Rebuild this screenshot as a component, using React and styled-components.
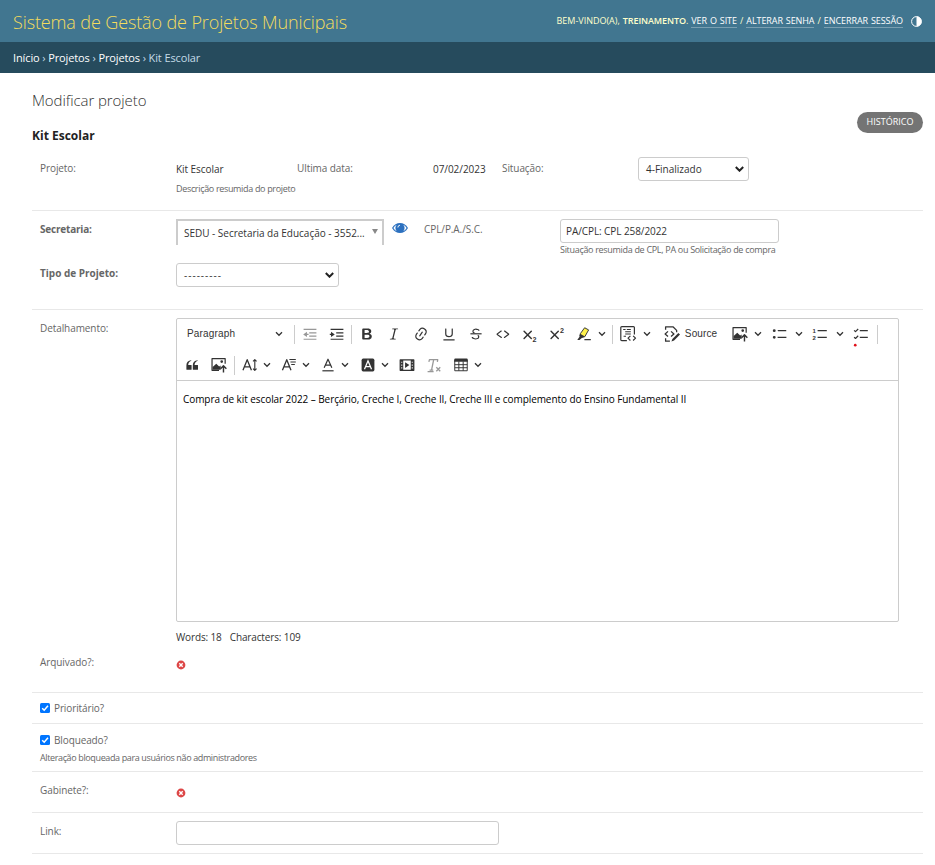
import React from "react";
import styled, { createGlobalStyle } from "styled-components";

const GlobalStyle = createGlobalStyle`
  * {
    box-sizing: border-box;
  }

  body {
    margin: 0;
    background-color: white;
    color: #333;
    font-family: "Open Sans", "Noto Sans", sans-serif;
    font-size: 10px;
    line-height: 14px;
  }
`;

const Container = styled.div`
  width: 935px;
  height: 865px;
  overflow: hidden;
`;

const Header = styled.header`
  height: 42px;
  padding: 0px 13px;
  display: flex;
  align-items: center;
  justify-content: space-between;
  background-color: #417690;
`;

const SiteName = styled.h1`
  margin: 2px 0px 0px;
  color: #f5dd5d;
  font-size: 18px;
  font-weight: 300;
  line-height: 24px;
  letter-spacing: -0.12px;
`;

const UserTools = styled.div`
  display: flex;
  align-items: center;
  color: #ffc;
  font-size: 9px;
  line-height: 12px;
  word-spacing: 0.7px;
  white-space: pre;
`;

const UserName = styled.strong`
  font-weight: 600;
  letter-spacing: -0.1px;
`;

const UserLink = styled.a`
  color: white;
  border-bottom: 1px solid rgba(255, 255, 255, 0.3);
  letter-spacing: -0.08px;
`;

const ThemeIcon = styled.svg`
  width: 11px;
  height: 11px;
  margin-left: 8px;
`;

const Breadcrumbs = styled.nav`
  height: 31px;
  padding-left: 13px;
  color: #c4dce8;
  background-color: #264b5d;
  font-size: 11px;
  line-height: 31px;
  letter-spacing: -0.12px;
`;

const Crumb = styled.a`
  color: white;
`;

const Content = styled.main`
  padding: 0px 12px 0px 32px;
`;

const Heading = styled.div`
  height: 74px;
  display: flex;
  justify-content: space-between;
`;

const PageTitle = styled.h2`
  margin: 16px 0px 0px;
  font-size: 15px;
  font-weight: 300;
  line-height: 22px;
  letter-spacing: -0.08px;
`;

const ObjectTitle = styled.h3`
  margin: 17px 0px 0px;
  color: #222;
  font-size: 12px;
  font-weight: 700;
  line-height: 16px;
`;

const HistoryButton = styled.a`
  width: 66px;
  height: 21px;
  margin-top: 39px;
  border-radius: 11px;
  background-color: #747474;
  color: white;
  font-size: 9px;
  line-height: 20px;
  text-align: center;
`;

const Row = styled.div`
  height: ${(props) => props.$height}px;
  padding-left: 8px;
  border-bottom: 1px solid #e8e8e8;
`;

const Fields = styled.div`
  height: ${(props) => props.$height || "auto"};
  padding-top: ${(props) => props.$top}px;
  display: flex;
  align-items: flex-start;
`;

const Label = styled.label`
  width: 136px;
  flex-shrink: 0;
  margin-top: ${(props) => props.$top || 0}px;
  color: #666;
  font-weight: ${(props) => (props.$required ? 700 : 400)};
  letter-spacing: ${(props) => props.$spacing || "-0.08px"};
`;

const Value = styled.div`
  width: ${(props) => props.$width}px;
  padding-top: 1px;
  letter-spacing: -0.05px;
  white-space: nowrap;
`;

const Help = styled.div`
  margin-top: ${(props) => props.$top || 0}px;
  color: #666;
  font-size: 9px;
  letter-spacing: ${(props) => props.$spacing || "-0.33px"};
  white-space: nowrap;
`;

const InputBox = styled.div`
  width: ${(props) => props.$width}px;
  height: 24px;
  padding: 4px 5px;
  border: 1px solid #ccc;
  border-radius: 3px;
  letter-spacing: -0.08px;
`;

const SelectBox = styled.div`
  width: ${(props) => props.$width}px;
  height: 24px;
  padding: 0px 4px 0px 7px;
  display: flex;
  align-items: center;
  justify-content: space-between;
  border: 1px solid #ccc;
  border-radius: 3px;
  letter-spacing: ${(props) => props.$spacing || 0};
`;

const SelectArrow = styled.svg`
  width: 9px;
  height: 6px;
`;

const SearchSelect = styled.div`
  width: 208px;
  height: 26px;
  padding: 5px 4px 0px 6px;
  display: flex;
  justify-content: space-between;
  border: 2px solid #ccc;
  border-bottom: none;
  letter-spacing: -0.02px;
  white-space: nowrap;
`;

const Triangle = styled.span`
  height: 0;
  margin-top: 3px;
  border: 3px solid transparent;
  border-top: 5px solid #888;
  border-bottom: none;
`;

const EyeIcon = styled.svg`
  width: 16px;
  height: 12px;
  margin: 3px 16px 0px 8px;
`;

const Editor = styled.div`
  width: 723px;
  height: 304px;
  border: 1px solid #ccc;
  border-radius: 2px;
`;

const Toolbar = styled.div`
  height: 62px;
  border-bottom: 1px solid #ccc;
`;

const ToolbarLine = styled.div`
  height: ${(props) => props.$height}px;
  padding-left: ${(props) => props.$start || 0}px;
  display: flex;
  align-items: center;
`;

const HeadingMenu = styled.div`
  width: 116px;
  padding: 0px 10px;
  display: flex;
  align-items: center;
  justify-content: space-between;
  letter-spacing: 0.18px;
  font-family: "Liberation Sans", Arial, sans-serif;
`;

const Tool = styled.div`
  width: ${(props) => props.$width || 27.2}px;
  flex-shrink: 0;
  display: flex;
  justify-content: center;
  opacity: ${(props) => (props.$disabled ? 0.5 : 1)};
`;

const ToolArrow = styled.div`
  width: ${(props) => props.$width}px;
  margin-right: ${(props) => props.$gap || 0}px;
  flex-shrink: 0;
  display: flex;
  justify-content: center;
`;

const SourceText = styled.span`
  width: 41px;
  margin-left: -1px;
  font-family: "Liberation Sans", Arial, sans-serif;
  letter-spacing: 0.1px;
`;

const Separator = styled.span`
  width: 1px;
  height: 19px;
  margin: 0px 1px 0px ${(props) => props.$before || 1}px;
  background-color: #ccc;
`;

const ToolSvg = styled.svg`
  width: 16px;
  height: 16px;
  flex-shrink: 0;
  overflow: visible;
  fill: #333;
`;

const Strokes = styled.g`
  fill: none;
  stroke: #333;
  stroke-width: ${(props) => props.$weight || 1.5};
  stroke-linecap: ${(props) => props.$cap || "butt"};
  stroke-linejoin: round;
`;

const IconText = styled.text`
  font-family: "Liberation Sans", Arial, sans-serif;
  font-size: ${(props) => props.$size}px;
  font-weight: 700;
`;

const ChevronSvg = styled.svg`
  width: 8px;
  height: 6px;
  flex-shrink: 0;
`;

const EditorText = styled.p`
  margin: 11px 0px 0px 6px;
  color: black;
  letter-spacing: -0.07px;
  white-space: nowrap;
`;

const WordCount = styled.div`
  margin: 8px 0px 0px 136px;
  display: flex;
  gap: 8px;
  letter-spacing: -0.13px;
`;

const NoIcon = styled.svg`
  width: 10px;
  height: 10px;
  margin-top: ${(props) => props.$top}px;
`;

const CheckLabel = styled.label`
  display: flex;
  align-items: flex-start;
  gap: 4px;
  color: #666;
  letter-spacing: -0.12px;
`;

const CheckBox = styled.svg`
  width: 10px;
  height: 10px;
  margin-top: 2px;
`;

const icons = {
  outdent: (
    <>
      <path d="M2 3.5h16V5H2zM9 7.8h9v1.5H9zM9 11.8h9v1.5H9zM2 15.8h16v1.5H2z" />
      <path d="M6.2 7.2 1.5 10.5l4.7 3.2v-2.4h2V9.8h-2z" />
    </>
  ),
  indent: (
    <>
      <path d="M2 3.5h16V5H2zM9 7.8h9v1.5H9zM9 11.8h9v1.5H9zM2 15.8h16v1.5H2z" />
      <path d="M2.5 7.2 7.2 10.5l-4.7 3.2v-2.4H1V9.8h1.5z" />
    </>
  ),
  bold: (
    <path d="M10.187 17H5.773c-.637 0-1.092-.138-1.364-.415-.273-.277-.409-.718-.409-1.323V4.738c0-.617.14-1.062.419-1.332.279-.27.73-.406 1.354-.406h4.68c.69 0 1.288.041 1.793.124.506.083.96.242 1.36.477.341.197.644.447.906.75a3.262 3.262 0 0 1 .808 2.162c0 1.401-.722 2.426-2.167 3.075C15.05 10.175 16 11.315 16 13.01a3.756 3.756 0 0 1-2.296 3.504 6.1 6.1 0 0 1-1.517.377c-.571.073-1.238.11-2 .11zm-.217-6.217H7v4.087h3.069c1.977 0 2.965-.69 2.965-2.072 0-.707-.256-1.22-.768-1.537-.512-.319-1.277-.478-2.296-.478zM7 5.13v3.619h2.606c.729 0 1.292-.067 1.69-.2a1.6 1.6 0 0 0 .91-.765c.165-.267.247-.566.247-.897 0-.707-.26-1.176-.778-1.409-.519-.232-1.31-.348-2.375-.348H7z" />
  ),
  italic: (
    <path d="m9.586 14.633.021.004c-.036.335.095.655.393.962.082.083.173.15.274.201h1.474a.6.6 0 1 1 0 1.2H5.304a.6.6 0 0 1 0-1.2h1.15c.474-.07.809-.182 1.005-.334.157-.122.291-.32.404-.597l2.416-9.55a1.053 1.053 0 0 0-.281-.823 1.12 1.12 0 0 0-.442-.296H8.15a.6.6 0 0 1 0-1.2h6.443a.6.6 0 1 1 0 1.2h-1.195c-.376.056-.65.155-.823.296-.215.175-.423.439-.623.79l-2.366 9.347z" />
  ),
  link: (
    <path d="m11.077 15 .991-1.416a.75.75 0 1 1 1.229.86l-1.148 1.64a.748.748 0 0 1-.217.206 5.251 5.251 0 0 1-8.503-5.955.741.741 0 0 1 .12-.274l1.147-1.639a.75.75 0 1 1 1.228.86L4.933 10.7l.006.003a3.75 3.75 0 0 0 6.132 4.294l.006.004zm5.494-5.335a.748.748 0 0 1-.12.274l-1.147 1.639a.75.75 0 1 1-1.228-.86l.86-1.23a3.75 3.75 0 0 0-6.144-4.301l-.86 1.229a.75.75 0 0 1-1.229-.86l1.148-1.64a.748.748 0 0 1 .217-.206 5.251 5.251 0 0 1 8.503 5.955zm-4.563-2.532a.75.75 0 0 1 .184 1.045l-3.155 4.505a.75.75 0 1 1-1.229-.86l3.155-4.506a.75.75 0 0 1 1.045-.184z" />
  ),
  underline: (
    <path d="M3 18v-1.5h14V18zm2.2-8V3.6c0-.4.4-.6.8-.6.3 0 .7.2.7.6v6.2c0 2 1.3 2.8 3.2 2.8 1.9 0 3.4-.9 3.4-2.9V3.6c0-.3.4-.5.8-.5.3 0 .7.2.7.5V10c0 2.7-2.2 4-4.9 4-2.6 0-4.7-1.2-4.7-4z" />
  ),
  strike: (
    <>
      <path d="M7 16.4c-.8-.4-1.5-.9-2.2-1.5a.6.6 0 0 1-.2-.5l.3-.6h1c1 1.2 2.1 1.7 3.7 1.7 1 0 1.8-.3 2.3-.6.6-.4.6-1.2.6-1.3.2-1.2-.9-2.1-.9-2.1h2.1c.3.7.4 1.2.4 1.7v.8l-.6 1.2c-.6.8-1.1 1-1.6 1.2a6 6 0 0 1-2.4.6c-1 0-1.8-.3-2.5-.6zM6.8 9 6 8.3c-.4-.5-.5-.8-.5-1.6 0-.7.1-1.3.5-1.8.4-.6 1-1 1.6-1.3a6.3 6.3 0 0 1 4.7 0 4 4 0 0 1 1.7 1l.3.7c0 .1.2.4-.2.7-.4.2-.9.1-1 0a3 3 0 0 0-1.2-1c-.4-.2-1-.3-2-.4-.7 0-1.4.2-2 .6-.8.6-1 .8-1 1.5 0 .8.5 1 1.2 1.5.6.4 1.1.7 1.9 1H6.8z" />
      <path d="M3 10.5V9h14v1.5z" />
    </>
  ),
  code: (
    <path d="m12.5 5.7 5.2 3.9v1.3l-5.6 4c-.1.2-.3.2-.5.2-.3-.1-.6-.7-.6-1l.3-.4 4.7-3.5L11.5 7l-.2-.2c-.1-.3-.1-.6 0-.8.2-.2.5-.4.8-.4a.8.8 0 0 1 .4.1zm-5.2 0L2 9.6v1.3l5.6 4c.1.2.3.2.5.2.3-.1.7-.7.6-1 0-.1 0-.3-.2-.4l-5-3.5L8.2 7l.2-.2c.1-.3.1-.6 0-.8-.2-.2-.5-.4-.8-.4a.8.8 0 0 0-.3.1z" />
  ),
  subscript: (
    <>
      <Strokes $weight={1.8} $cap="round">
        <path d="M2.6 6.5l9 9M11.6 6.5l-9 9" />
      </Strokes>
      <IconText x="13.2" y="19.4" $size={9}>
        2
      </IconText>
    </>
  ),
  superscript: (
    <>
      <Strokes $weight={1.8} $cap="round">
        <path d="M2.6 6.5l9 9M11.6 6.5l-9 9" />
      </Strokes>
      <IconText x="13.8" y="9" $size={9}>
        2
      </IconText>
    </>
  ),
  highlight: (
    <>
      <path d="M10.8 2.2 15.5 5l-4.3 8.5-6-3.3z" fill="#fdf04a" />
      <Strokes $weight={1.2}>
        <path d="M10.8 2.2 15.8 4.9 11 13.4 7 14.2 4.8 12.8 5.4 9.6z" />
      </Strokes>
      <path d="M5.200 9.600 11.200 13 7.600 14.800 4.400 17.600H1.600l3-4.400zM10.500 16.200h8v1.500h-8z" />
    </>
  ),
  template: (
    <Strokes $weight={1.5}>
      <path d="M8.6 18.4H2.2A1.2 1.2 0 0 1 1 17.200V1.900A1.200 1.200 0 0 1 2.200.7h14.600A1.200 1.200 0 0 1 18 1.900V10.600" />
      <path d="M4 4.400h3M8.500 4.400h5M6.500 7.200h7M6.500 10h7M4.500 12.800h3" />
      <path d="M13 12.300l-3 2.900 3 2.900M16.400 12.300l3 2.900-3 2.900" />
    </Strokes>
  ),
  source: (
    <>
      <Strokes $weight={1.6}>
        <path d="M2 4.800V1h9.200l4.600 4.500v2.300M2 15.200V19h5.400" />
        <path d="M5 6.700 1.400 10l3.600 3.200M8.800 6.700l3.600 3.300-3.600 3.200" />
      </Strokes>
      <path d="M18 8.800 20 10.600l-7.400 7.600-3.300 1.200 1.200-3.300z" />
    </>
  ),
  image: (
    <>
      <Strokes $weight={1.5}>
        <path d="M10 16.6H1.3V2h16.4v6.5" />
      </Strokes>
      <path d="M2 16V12.5l4.600-4.200 3.600 3.600 1.800-1.400.2 5.500zM13.400 4a1.700 1.700 0 1 1 0 3.400 1.700 1.700 0 0 1 0-3.400z" />
      <Strokes $weight={1.8}>
        <path d="M15.6 19.4v-8M12 14.6l3.6-3.6 3.6 3.6" />
      </Strokes>
    </>
  ),
  bulleted: (
    <path d="M7 5.700c0 .4.4.8.8.8h10V5H7.800c-.4 0-.8.3-.8.7zM7 15h11v-1.500H7zM2.800 4a1.800 1.800 0 1 1 0 3.600 1.800 1.800 0 0 1 0-3.600zm0 8.400a1.800 1.800 0 1 1 0 3.600 1.800 1.800 0 0 1 0-3.600z" />
  ),
  numbered: (
    <>
      <path d="M7 5h11.500v1.500H7zM7 13.500h11.500V15H7z" />
      <IconText x="0.6" y="8.2" $size={7.5}>
        1
      </IconText>
      <IconText x="0.6" y="17.2" $size={7.5}>
        2
      </IconText>
    </>
  ),
  todo: (
    <>
      <path d="M8.500 5h10v1.500h-10zM8.500 13.500h10V15h-10z" />
      <Strokes $weight={1.5}>
        <path d="M1.400 5.400l1.700 1.700 3.400-3.400M1.400 13.900l1.700 1.700 3.400-3.400" />
      </Strokes>
      <circle cx="2.8" cy="24" r="1.7" fill="#e0101a" />
    </>
  ),
  quote: (
    <path d="M3 10.423a6.5 6.5 0 0 1 6.056-6.408l.038.67C6.448 5.423 5.354 7.663 5.22 10H9c.552 0 .5.432.5.986v4.511c0 .554-.448.503-1 .503h-5c-.552 0-.5-.449-.5-1.003v-4.574zm8 0a6.5 6.5 0 0 1 6.056-6.408l.038.67c-2.646.739-3.74 2.979-3.873 5.315H17c.552 0 .5.432.5.986v4.511c0 .554-.448.503-1 .503h-5c-.552 0-.5-.449-.5-1.003v-4.574z" />
  ),
  fontSize: (
    <>
      <Strokes $weight={1.6}>
        <path d="M1.2 16.5 6.5 3.3l5.3 13.2M3 12.3h7" />
      </Strokes>
      <Strokes $weight={1.4}>
        <path d="M16 4.5v11M13.8 5.6 16 3.2l2.2 2.4M13.8 14.4l2.2 2.4 2.2-2.4" />
      </Strokes>
    </>
  ),
  fontFamily: (
    <>
      <Strokes $weight={1.6}>
        <path d="M1.8 16.5 7.2 3.3l5.3 13.2M3.6 12.3h7" />
      </Strokes>
      <path d="M10.5 2.6h8v1.3h-8zM11.8 5.6h6.7v1.3h-6.7zM12.8 8.6h4.5v1.3h-4.5z" />
    </>
  ),
  fontColor: (
    <>
      <Strokes $weight={1.5}>
        <path d="M5.2 13.5 10 2.8l4.8 10.7M6.8 10.2h6.4" />
      </Strokes>
      <path d="M3 16.5h14V18H3z" />
    </>
  ),
  fontBackground: (
    <>
      <rect x="2" y="2" width="16" height="16" rx="2" />
      <path d="M5.6 15.2 10 4.8l4.4 10.4M7.2 12h5.6" fill="none" stroke="white" strokeWidth="1.6" />
    </>
  ),
  media: (
    <>
      <Strokes $weight={1.5}>
        <path d="M1.500 3.600h17v13h-17z" />
      </Strokes>
      <path d="M1.500 3.600h3.800v13H1.500zM14.700 3.600h3.800v13h-3.800zM7.600 6.600 13 10.100l-5.400 3.500z" />
      <path d="M2.800 5.800h1.300v1.500H2.800zM2.800 9.300h1.300v1.500H2.800zM2.800 12.800h1.300v1.500H2.800zM15.900 5.800h1.300v1.500h-1.300zM15.900 9.300h1.300v1.500h-1.300zM15.900 12.800h1.300v1.500h-1.300z" fill="white" />
    </>
  ),
  removeFormat: (
    <Strokes $weight={1.6}>
      <path d="M3.6 6 4.3 3.3h10.4L14.2 6M9.6 3.3 7 16.2M4.5 16.4H9M2 18.4h7.5" />
      <path d="M12.9 12.9l4.900 4.900M17.800 12.900l-4.900 4.900" />
    </Strokes>
  ),
  table: (
    <>
      <path d="M1.5 3.5A1.5 1.5 0 0 1 3 2h14a1.5 1.5 0 0 1 1.5 1.5V6h-17z" />
      <Strokes $weight={1.2}>
        <path d="M2.2 4v13.2h15.600V4M2.200 9.600h15.600M2.200 13.400h15.600M7.300 5.500v11.700M12.700 5.500v11.700" />
      </Strokes>
    </>
  ),
};

const Icon = ({ name }) => <ToolSvg viewBox="0 0 20 20">{icons[name]}</ToolSvg>;

const Chevron = () => (
  <ChevronSvg viewBox="0 0 8 6">
    <path d="M1 1.3l3 3 3-3" fill="none" stroke="#333" strokeWidth="1.3" />
  </ChevronSvg>
);

const SplitTool = ({ name, width, arrow, gap }) => (
  <>
    <Tool $width={width}>
      <Icon name={name} />
    </Tool>
    <ToolArrow $width={arrow} $gap={gap}>
      <Chevron />
    </ToolArrow>
  </>
);

const SelectChevron = () => (
  <SelectArrow viewBox="0 0 9 6">
    <path d="M0.8 1l3.7 3.7L8.2 1" fill="none" stroke="#222" strokeWidth="2" />
  </SelectArrow>
);

const No = ({ top }) => (
  <NoIcon $top={top} viewBox="0 0 10 10">
    <circle cx="5" cy="5" r="4.4" fill="#dd4646" />
    <path d="M3.3 3.3l3.4 3.4M6.7 3.3L3.3 6.7" stroke="white" strokeWidth="1.4" />
  </NoIcon>
);

const Checked = () => (
  <CheckBox viewBox="0 0 10 10">
    <rect width="10" height="10" rx="1.5" fill="#0075ff" />
    <path d="M2.2 5.2l2 2 3.8-4.4" fill="none" stroke="white" strokeWidth="1.5" />
  </CheckBox>
);

const textTools = ["bold", "italic", "link", "underline", "strike", "code", "subscript", "superscript"];

const EditorToolbar = () => {
  return (
    <Toolbar>
      <ToolbarLine $height={30}>
        <HeadingMenu>
          Paragraph
          <Chevron />
        </HeadingMenu>
        <Separator />
        <Tool $disabled>
          <Icon name="outdent" />
        </Tool>
        <Tool>
          <Icon name="indent" />
        </Tool>
        <Separator />
        {textTools.map((name) => (
          <Tool key={name}>
            <Icon name={name} />
          </Tool>
        ))}
        <SplitTool name="highlight" width={26} arrow={10} gap={4} />
        <Separator />
        <SplitTool name="template" width={27.6} arrow={10.8} gap={5.6} />
        <Tool $width={28}>
          <Icon name="source" />
        </Tool>
        <SourceText>Source</SourceText>
        <SplitTool name="image" width={27.6} arrow={8.2} gap={4.1} />
        <SplitTool name="bulleted" width={27.6} arrow={11} gap={2} />
        <SplitTool name="numbered" width={27.6} arrow={11.2} gap={2.4} />
        <Tool>
          <Icon name="todo" />
        </Tool>
        <Separator $before={2} />
      </ToolbarLine>
      <ToolbarLine $height={32} $start={1}>
        <Tool $width={28}>
          <Icon name="quote" />
        </Tool>
        <Tool $width={25.4}>
          <Icon name="image" />
        </Tool>
        <Separator $before={2.6} />
        <SplitTool name="fontSize" width={29} arrow={3.4} gap={7} />
        <SplitTool name="fontFamily" width={27.2} arrow={6.8} gap={5} />
        <SplitTool name="fontColor" width={27.2} arrow={6.8} gap={5.8} />
        <SplitTool name="fontBackground" width={27.2} arrow={7.2} gap={5} />
        <Tool>
          <Icon name="media" />
        </Tool>
        <Tool $disabled>
          <Icon name="removeFormat" />
        </Tool>
        <SplitTool name="table" width={26} arrow={8} />
      </ToolbarLine>
    </Toolbar>
  );
};

const App = () => {
  return (
    <Container>
      <GlobalStyle />
      <Header>
        <SiteName>Sistema de Gestão de Projetos Municipais</SiteName>
        <UserTools>
          BEM-VINDO(A), <UserName>TREINAMENTO</UserName>. <UserLink>VER O SITE</UserLink> /{" "}
          <UserLink>ALTERAR SENHA</UserLink> / <UserLink>ENCERRAR SESSÃO</UserLink>
          <ThemeIcon viewBox="0 0 11 11">
            <circle cx="5.5" cy="5.5" r="4.9" fill="none" stroke="white" />
            <path d="M5.5 0.5a5 5 0 0 1 0 10z" fill="white" />
          </ThemeIcon>
        </UserTools>
      </Header>
      <Breadcrumbs>
        <Crumb>Início</Crumb> › <Crumb>Projetos</Crumb> › <Crumb>Projetos</Crumb> › Kit Escolar
      </Breadcrumbs>
      <Content>
        <Heading>
          <div>
            <PageTitle>Modificar projeto</PageTitle>
            <ObjectTitle>Kit Escolar</ObjectTitle>
          </div>
          <HistoryButton>HISTÓRICO</HistoryButton>
        </Heading>

        <Row $height={64}>
          <Fields $top={10}>
            <Label $top={4}>Projeto:</Label>
            <Value $width={121}>
              <Fields $top={4}>Kit Escolar</Fields>
              <Help $top={6}>Descrição resumida do projeto</Help>
            </Value>
            <Label $top={4}>Ultima data:</Label>
            <Value $width={69}>
              <Fields $top={4}>07/02/2023</Fields>
            </Value>
            <Label $top={4}>Situação:</Label>
            <SelectBox $width={111}>
              4-Finalizado
              <SelectChevron />
            </SelectBox>
          </Fields>
        </Row>

        <Row $height={99}>
          <Fields $top={8} $height="52px">
            <Label $top={3} $required $spacing="-0.2px">
              Secretaria:
            </Label>
            <SearchSelect>
              SEDU - Secretaria da Educação - 3552...
              <Triangle />
            </SearchSelect>
            <EyeIcon viewBox="0 0 16 12">
              <path d="M0 6C2 2.6 4.8 0.9 8 0.9S14 2.6 16 6c-2 3.4-4.8 5.1-8 5.1S2 9.4 0 6z" fill="#2b70bf" />
              <path
                d="M4.8 2.7C3.4 3.4 2.3 4.5 1.4 6c.9 1.5 2 2.6 3.4 3.3a4.6 4.6 0 0 1 0-6.6zM11.2 2.7a4.6 4.6 0 0 1 0 6.6c1.4-.7 2.5-1.8 3.4-3.3-.9-1.5-2-2.6-3.4-3.3z"
                fill="white"
              />
              <path d="M5.9 5.5A2.3 2.3 0 0 1 8 3.2" fill="none" stroke="white" strokeWidth="0.9" />
            </EyeIcon>
            <Label $top={3}>CPL/P.A./S.C.</Label>
            <div>
              <InputBox $width={219}>PA/CPL: CPL 258/2022</InputBox>
              <Help $spacing="-0.31px">Situação resumida de CPL, PA ou Solicitação de compra</Help>
            </div>
          </Fields>
          <Fields $top={0}>
            <Label $top={3} $required $spacing="0px">
              Tipo de Projeto:
            </Label>
            <SelectBox $width={163} $spacing="1px">
              ---------
              <SelectChevron />
            </SelectBox>
          </Fields>
        </Row>

        <Row $height={383}>
          <Fields $top={8}>
            <Label $top={3}>Detalhamento:</Label>
            <Editor>
              <EditorToolbar />
              <EditorText>
                Compra de kit escolar 2022 – Berçário, Creche I, Creche II, Creche III e complemento do Ensino
                Fundamental II
              </EditorText>
            </Editor>
          </Fields>
          <WordCount>
            <span>Words: 18</span>
            <span>Characters: 109</span>
          </WordCount>
          <Fields $top={11}>
            <Label>Arquivado?:</Label>
            <No top={5} />
          </Fields>
        </Row>

        <Row $height={31}>
          <Fields $top={8}>
            <CheckLabel>
              <Checked />
              Prioritário?
            </CheckLabel>
          </Fields>
        </Row>

        <Row $height={48}>
          <Fields $top={9}>
            <CheckLabel>
              <Checked />
              Bloqueado?
            </CheckLabel>
          </Fields>
          <Help $top={4} $spacing="-0.37px">
            Alteração bloqueada para usuários não administradores
          </Help>
        </Row>

        <Row $height={41}>
          <Fields $top={11}>
            <Label>Gabinete?:</Label>
            <No top={5} />
          </Fields>
        </Row>

        <Row $height={41}>
          <Fields $top={8}>
            <Label $top={3}>Link:</Label>
            <InputBox $width={323} />
          </Fields>
        </Row>
      </Content>
    </Container>
  );
};

export default App;
